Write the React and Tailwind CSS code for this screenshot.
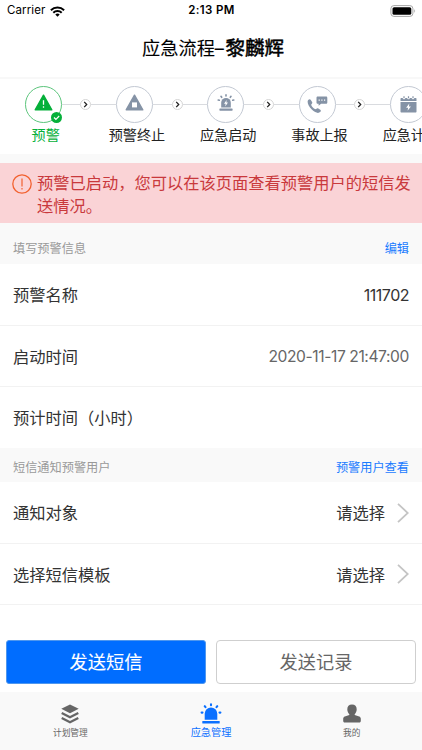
import { useState } from "react";

const steps = [
  { label: "预警", icon: "alert", active: true },
  { label: "预警终止", icon: "stop" },
  { label: "应急启动", icon: "siren" },
  { label: "事故上报", icon: "phone" },
  { label: "应急计划", icon: "calendar" },
];

const tabs = [
  { key: "plan", label: "计划管理" },
  { key: "emergency", label: "应急管理" },
  { key: "mine", label: "我的" },
];

function StepIcon({ name }) {
  if (name === "alert") {
    return (
      <svg width="19" height="17" viewBox="0 0 19 17" className="-mt-1">
        <path
          d="M9.5 1.2 17.8 15.8H1.2Z"
          fill="currentColor"
          stroke="currentColor"
          strokeWidth="1.4"
          strokeLinejoin="round"
        />
        <path d="M9.5 6.2v4.6M9.5 12.3v1.5" stroke="#fff" strokeWidth="1.3" />
      </svg>
    );
  }
  if (name === "stop") {
    return (
      <svg width="19" height="17" viewBox="0 0 19 17" className="-mt-1">
        <path
          d="M9.5 1.2 17.8 15.8H1.2Z"
          fill="currentColor"
          stroke="currentColor"
          strokeWidth="1.4"
          strokeLinejoin="round"
        />
        <rect x="7" y="8.4" width="5" height="5" fill="#fff" />
      </svg>
    );
  }
  if (name === "siren") {
    return (
      <svg width="18" height="18" viewBox="0 0 18 18" className="-mt-1">
        <path d="M4.200 13.500V8.700a4.800 4.800 0 0 1 9.600 0v4.800Z" fill="currentColor" />
        <rect x="2.400" y="14.500" width="13.200" height="2.200" rx=".6" fill="currentColor" />
        <path
          d="M9 .9v1.100M4 2.300l.7 1M14 2.300l-.7 1M1.200 6l1.100.3M16.800 6l-1.100.3"
          stroke="currentColor"
          strokeWidth="1.6"
          strokeLinecap="round"
        />
        <path d="M9.700 6 7 9.800h1.700L8.200 12.400 11 8.600H9.300Z" fill="#fff" />
      </svg>
    );
  }
  if (name === "phone") {
    return (
      <svg width="21" height="18" viewBox="0 0 21 18" className="mt-px">
        <path
          d="M1.200 4.100C2 3.200 3.200 3 3.800 3.900l1.300 2.200c.4.8.1 1.500-.7 2.200-.5.500.2 1.900 1.500 3.200s2.700 2 3.200 1.500c.8-.8 1.500-1 2.200-.6l2 1.300c.8.6.7 1.600-.2 2.400-1.600 1.500-4.700 1-8.300-2.500S-.3 5.600 1.200 4.100Z"
          fill="currentColor"
        />
        <path
          d="M10.800.6h8.200c.8 0 1.300.5 1.300 1.300v4.600c0 .8-.5 1.300-1.300 1.300h-4.900l-2.500 2V7.800h-.8c-.8 0-1.300-.5-1.300-1.300V1.900c0-.8.5-1.300 1.300-1.300Z"
          fill="currentColor"
        />
        <path d="M11.600 4.200h1.200M14.300 4.200h1.200M17 4.200h1.200" stroke="#fff" strokeWidth="1.200" />
      </svg>
    );
  }
  return (
    <svg width="17" height="17" viewBox="0 0 17 17">
      <path
        d="M1.200 2h1.500a1.300 1.300 0 0 0 2.600 0h1.900a1.300 1.300 0 0 0 2.600 0h1.900a1.300 1.300 0 0 0 2.600 0h1.500c.4 0 .7.3.7.7v2.400H.5V2.700c0-.4.3-.7.7-.7Z"
        fill="currentColor"
      />
      <path d="M.5 6h16v9.800c0 .4-.3.700-.7.700H1.200a.7.7 0 0 1-.7-.7Z" fill="currentColor" />
      <path d="M4 .3v2M8.500.3v2M13 .3v2" stroke="currentColor" strokeWidth="1.200" />
      <path d="M9.300 7.500 6.100 11.700h2l-.5 3 3.300-4.200h-2Z" fill="#fff" />
    </svg>
  );
}

function TabIcon({ name }) {
  if (name === "plan") {
    return (
      <svg width="18" height="20" viewBox="0 0 18 20">
        <path d="M9 .4 17.700 4.800 9 9.300.3 4.800Z" fill="currentColor" />
        <path
          d="M.7 9 9 13.200 17.300 9M.7 14 9 18.200l8.300-4.200"
          fill="none"
          stroke="currentColor"
          strokeWidth="2.300"
        />
      </svg>
    );
  }
  if (name === "emergency") {
    return (
      <svg width="22" height="21" viewBox="0 0 22 21">
        <path d="M4.700 16.800v-6a6.300 6.300 0 0 1 12.600 0v6Z" fill="currentColor" />
        <rect x="2.300" y="18" width="17.400" height="2.500" rx=".5" fill="currentColor" />
        <path
          d="M11 1.200v1M4.700 3.200l.8 1M17.300 3.200l-.8 1M1.600 9.600h.9M20.400 9.600h-.9"
          stroke="currentColor"
          strokeWidth="2.100"
          strokeLinecap="round"
        />
      </svg>
    );
  }
  return (
    <svg width="18" height="19" viewBox="0 0 18 19">
      <path
        d="M9 .5c3.100 0 4.700 2 4.700 4.800 0 2-.8 3.900-2 4.900v.9l4.500 1.400c1 .4 1.600 1.200 1.600 2.300v2.200c0 .9-.6 1.500-1.500 1.500H1.700c-.9 0-1.500-.6-1.500-1.500v-2.200c0-1.100.6-1.900 1.600-2.300l4.500-1.400v-.9c-1.200-1-2-2.900-2-4.900C4.300 2.500 5.900.5 9 .5Z"
        fill="currentColor"
      />
    </svg>
  );
}

function StatusBar() {
  return (
    <div className="flex h-[22px] items-center justify-between pr-[6px] pl-[7px] text-[11.5px] text-black">
      <div className="flex w-32 items-center gap-[5px]">
        <span className="tracking-[0.1px]">Carrier</span>
        <svg width="15" height="11" viewBox="0 0 15 11" fill="none" stroke="#000" strokeWidth="2">
          <path d="M.9 4.200a9.500 9.500 0 0 1 13.200 0" />
          <path d="M3.300 6.800a6 6 0 0 1 8.400 0" />
          <path d="M7.500 10.800 5.300 8.600a3.100 3.100 0 0 1 4.400 0Z" fill="#000" stroke="none" />
        </svg>
      </div>
      <span className="font-semibold tracking-[0.4px]">2:13 PM</span>
      <div className="flex w-32 justify-end">
        <svg width="26" height="12" viewBox="0 0 26 12">
          <rect x=".9" y=".6" width="22" height="10.800" rx="3" fill="none" stroke="#a6a6a6" />
          <rect x="2.500" y="2.200" width="18.800" height="7.600" rx="1.600" />
          <path d="M24.300 4.300c1.100.5 1.100 2.900 0 3.400Z" fill="#a6a6a6" />
        </svg>
      </div>
    </div>
  );
}

function Step({ step, first }) {
  return (
    <div className="w-[91.3px] shrink-0">
      <div className="flex items-center">
        <div className={`h-px w-[25px] ${first ? "" : "bg-[#d9dbdf]"}`} />
        <div
          className={`relative flex size-[37px] shrink-0 items-center justify-center rounded-full border ${
            step.active ? "border-[#5cc57c] text-[#05b03a]" : "border-[#c3c9d3] text-[#8593a6]"
          }`}
        >
          <StepIcon name={step.icon} />
          {step.active && (
            <svg
              width="11"
              height="11"
              viewBox="0 0 11 11"
              className="absolute right-[-1px] bottom-[-1px]"
            >
              <circle cx="5.500" cy="5.500" r="5.500" fill="#05b03a" />
              <path d="m3 5.500 1.900 1.800L8.200 4" fill="none" stroke="#fff" strokeWidth="1.200" />
            </svg>
          )}
        </div>
        <div className="h-px w-[18.8px] bg-[#d9dbdf]" />
        <div className="flex size-[11px] shrink-0 items-center justify-center rounded-full border border-[#d5d5d5]">
          <svg width="5" height="7" viewBox="0 0 5 7" className="shrink-0">
            <path d="m1.200.9 2.500 2.600-2.500 2.600" fill="none" stroke="#222" strokeWidth="1.300" />
          </svg>
        </div>
      </div>
      <div
        className={`mt-[2px] text-center text-[14.1px] leading-[20px] whitespace-nowrap ${
          step.active ? "text-[#05b03a]" : "text-[#222]"
        }`}
      >
        {step.label}
      </div>
    </div>
  );
}

function SectionTitle({ title, action, className }) {
  return (
    <div
      className={`flex items-start justify-between bg-[#f9f9f9] px-[13px] text-[12.2px] leading-[18px] ${className}`}
    >
      <span className="text-[#999]">{title}</span>
      <button className="text-[#1a7bff]">{action}</button>
    </div>
  );
}

function Row({ label, children, className = "h-[61.5px] border-b" }) {
  return (
    <div
      className={`flex items-center justify-between border-[#f2f2f2] px-[13px] pt-[2px] text-[16.25px] text-[#333] ${className}`}
    >
      <span>{label}</span>
      {children}
    </div>
  );
}

function Select() {
  return (
    <span className="flex items-center gap-[12px]">
      请选择
      <svg
        width="12"
        height="20"
        viewBox="0 0 12 20"
        fill="none"
        stroke="#c4c4c4"
        strokeWidth="1.800"
        className="-mt-px"
      >
        <path d="m1 .8 9.800 9.200L1 19.200" />
      </svg>
    </span>
  );
}

export default function App() {
  const [tab, setTab] = useState("emergency");

  return (
    <div className="flex h-[750px] w-[422px] flex-col overflow-hidden bg-white font-['Inter','Noto_Sans_CJK_SC',sans-serif]">
      <StatusBar />

      {/* Header */}
      <header className="flex h-[57px] items-center justify-center border-b-2 border-[#f8f8f8] pb-[2px] pl-[4px] text-[18.2px] text-black">
        <h1 className="[-webkit-text-stroke:0.1px]">
          应急流程–
          <span className="ml-[1.5px] text-[19.5px] [-webkit-text-stroke:0.5px]">黎麟辉</span>
        </h1>
      </header>

      {/* Process steps */}
      <div className="flex h-[75px] overflow-hidden pt-[7px]">
        {steps.map((step, i) => (
          <Step key={step.label} step={step} first={i === 0} />
        ))}
      </div>

      {/* Notice */}
      <div className="border-t-9 border-[#f9f9f9]">
        <div className="flex h-[60px] gap-[5px] bg-[#fad3d6] pt-[9px] pl-[12px]">
          <svg width="20" height="20" viewBox="0 0 20 20" className="mt-[2px] shrink-0">
            <circle cx="10" cy="10" r="9.200" fill="none" stroke="#f2612f" strokeWidth="1.300" />
            <path d="M10 4.500v8M10 14v1.500" stroke="#f2612f" strokeWidth="1.200" />
          </svg>
          <p className="text-[16.25px] leading-[22.5px] text-[#c9393c]">
            预警已启动，您可以在该页面查看预警用户的短信发
            <br />
            送情况。
          </p>
        </div>
      </div>

      {/* Warning info */}
      <SectionTitle title="填写预警信息" action="编辑" className="h-[41px] pt-[17px]" />
      <Row label="预警名称">
        <span className="text-[16px] tracking-[-0.5px]">111702</span>
      </Row>
      <Row label="启动时间">
        <span className="text-[15.6px] tracking-[-0.4px] text-[#666]">2020-11-17 21:47:00</span>
      </Row>
      <Row label="预计时间（小时）" className="h-[61px]" />

      {/* SMS notice */}
      <SectionTitle title="短信通知预警用户" action="预警用户查看" className="h-[34px] pt-[11px]" />
      <Row label="通知对象">
        <Select />
      </Row>
      <Row label="选择短信模板">
        <Select />
      </Row>

      {/* Actions */}
      <div className="mt-auto mb-2 flex gap-[10px] px-[6px] text-[18.2px]">
        <button className="h-[44px] flex-1 rounded-[3px] border border-[#4f97ee] bg-[#006dff] pt-[2px] text-white [-webkit-text-stroke:0.1px]">
          发送短信
        </button>
        <button className="h-[44px] flex-1 rounded-[4px] border border-[#cfcfcf] bg-white pt-[2px] text-[#666]">
          发送记录
        </button>
      </div>

      {/* Tab bar */}
      <nav className="flex h-[58px] shrink-0 bg-[#f9f9f9]">
        {tabs.map((item) => (
          <button
            key={item.key}
            onClick={() => setTab(item.key)}
            className={`flex flex-1 flex-col items-center ${
              tab === item.key
                ? "pt-[11px] text-[10.2px] leading-[16px] text-[#0b70ff]"
                : "pt-[12px] text-[8.7px] leading-[16px] text-[#666]"
            }`}
          >
            <span className="flex h-[21px] items-start">
              <TabIcon name={item.key} />
            </span>
            <span>{item.label}</span>
          </button>
        ))}
      </nav>
    </div>
  );
}
